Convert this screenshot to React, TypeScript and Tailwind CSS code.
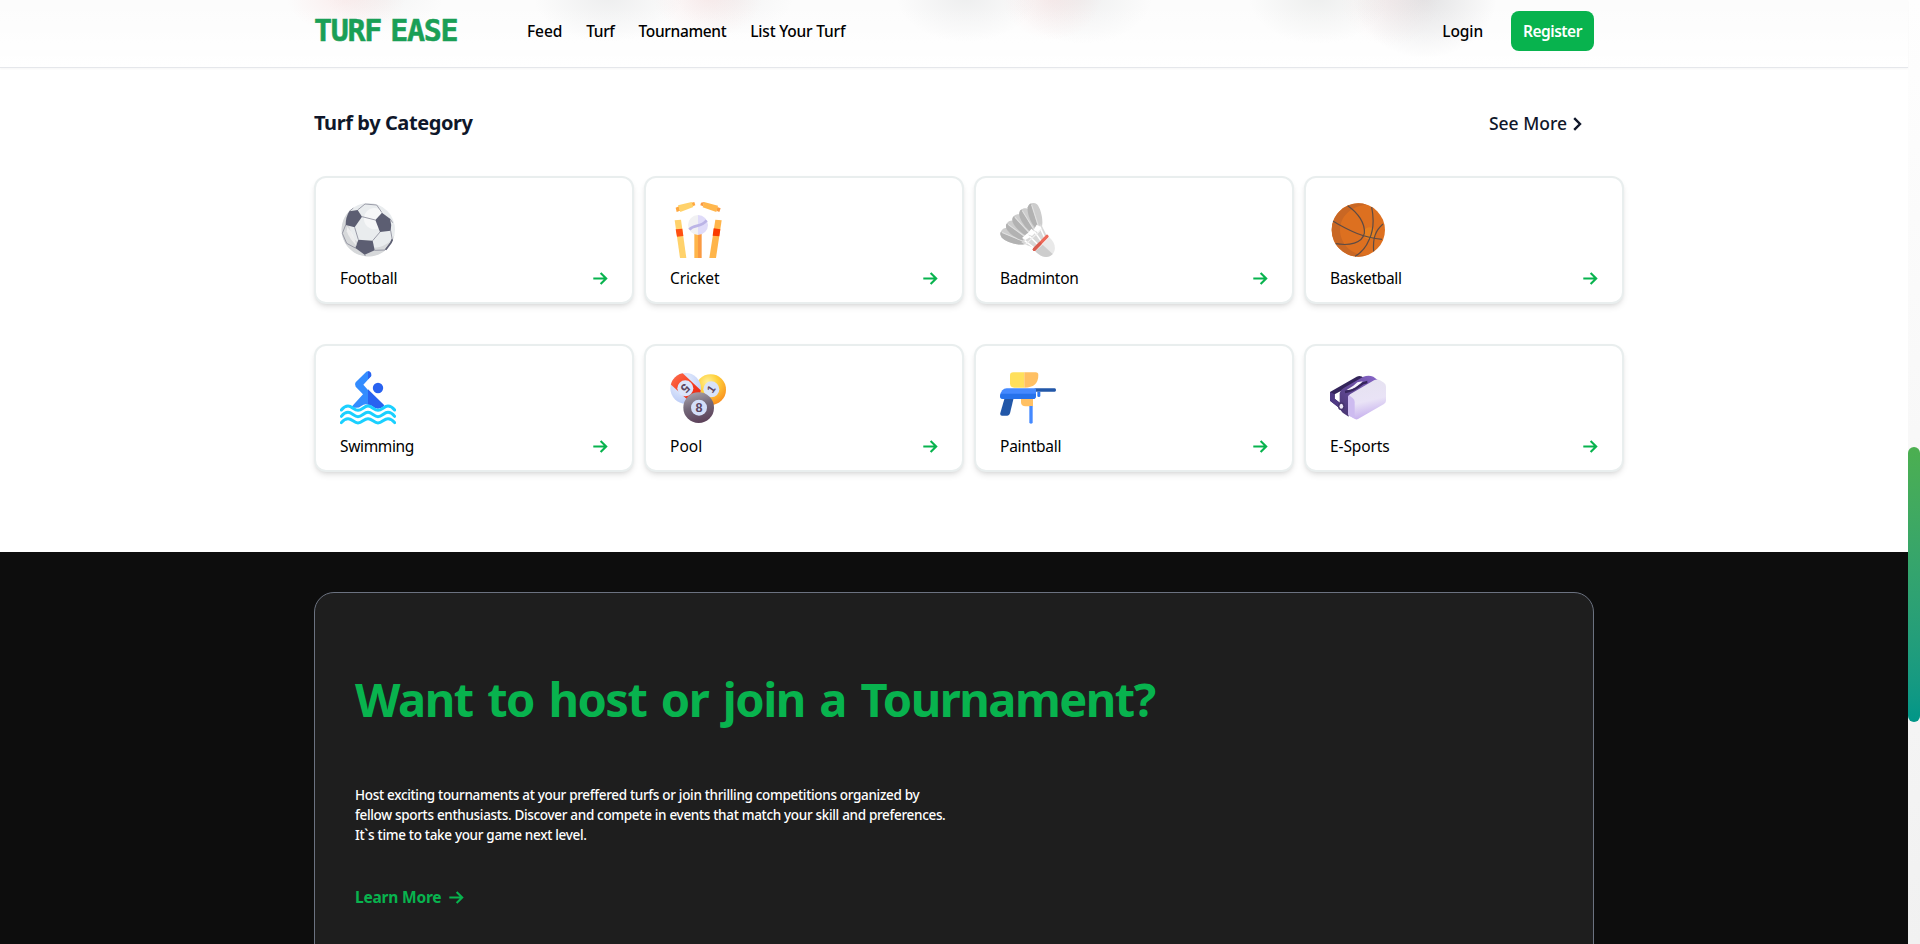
import React from "react";

type IconProps = { className?: string };

function ArrowRight({ className = "" }: IconProps) {
  return (
    <svg viewBox="0 0 15 13" className={"h-[13px] w-[15px] " + className} fill="none" stroke="currentColor" strokeWidth="2.1">
      <path d="M0.3 6.5H13.2M7.600 0.9L13.2 6.5L7.600 12.1" />
    </svg>
  );
}

function FootballIcon() {
  return (
    <svg viewBox="0 0 168 168" className="size-14">
      <circle cx="85" cy="83" r="80" fill="#e9ecee" />
      <path d="M36 20A80 80 0 1 0 163 100C140 150 60 150 36 100C24 72 24 44 36 20Z" fill="#d6d8da" />
      <circle cx="104" cy="50" r="32" fill="#f6f7f8" />
      <g fill="none" stroke="#8d8e9c" strokeWidth="2.6">
        <path d="M66 44L106 54M53 24L75 6L110 9L126 32M44 76L55 113M120 90L98 116M17 69L7 94L20 124L46 138M152 86L157 114L135 144L104 145" />
        <path d="M150 50L158 62M28 28L40 18M74 158L76 162" />
      </g>
      <path d="M157 112L153 122L137 143" fill="none" stroke="#5c5e72" strokeWidth="5" />
      <g fill="#5c5e72">
        <path d="M28 28L53 24L66 44L44 76L17 69Q17 45 28 28Z" />
        <path d="M126 32L150 50Q156 68 152 86L120 90L106 54Z" />
        <path d="M55 113L98 116L104 145L74 158L46 138Z" />
      </g>
      <path d="M22 74Q42 96 50 132Q28 110 20 88Z" fill="#f7f7f7" opacity=".7" />
    </svg>
  );
}

function CricketIcon() {
  return (
    <svg viewBox="0 0 168 168" className="size-14">
      <path d="M17 17L27 13L30 26L20 30ZM64 2L73 0L76 10L67 13Z" fill="#ffa63d" />
      <path d="M24 10L65 0L70 15L31 30Z" fill="#ffd26b" />
      <path d="M93 2L102 0L100 13L91 10ZM142 15L152 19L148 30L139 26Z" fill="#fa9a42" />
      <path d="M102 0L144 11L139 30L98 16Z" fill="#ffb74d" />
      <path d="M14 55L33 53L49 168H30Z" fill="#ffd26b" />
      <path d="M17 82L37 80L40 102L21 104Z" fill="#ff5012" />
      <path d="M136 53L155 55L138 168H118Z" fill="#ffb54a" />
      <path d="M131 79L151 82L148 103L128 101Z" fill="#fa3a00" />
      <path d="M73 92H84V168H73Z" fill="#ffb54a" />
      <path d="M84 92H95V168H84Z" fill="#fa9a42" />
      <path d="M84 39A30 30 0 0 0 84 99Z" fill="#f1f1f3" />
      <path d="M84 39A30 30 0 0 1 84 99Z" fill="#dfdbf9" />
      <path d="M58 83C72 66 92 78 110 55" fill="none" stroke="#bbb4e6" strokeWidth="8" />
    </svg>
  );
}

const feathers = [
  "translate(40 104) rotate(20)",
  "translate(54 87) rotate(34)",
  "translate(70 71) rotate(45)",
  "translate(87 56) rotate(56)",
  "translate(107 42) rotate(70)",
];

function BadmintonIcon() {
  return (
    <svg viewBox="0 0 168 168" className="size-14">
      <path d="M20 90L60 50L110 30L120 80L84 116L30 104Z" fill="#b8b8b8" />
      {feathers.map((t) => (
        <g key={t} transform={t}>
          <path d="M44 5C34 20 -12 24 -32 14C-43 7 -43 -9 -32 -16C-12 -24 34 -15 44 0Z" fill="#cdcdcd" />
          <path d="M44 5C34 20 -12 24 -32 14C-40 8 -41 4 -40 0Z" fill="#b2b2b2" />
          <path d="M-36 0L42 3" stroke="#e2e2e2" strokeWidth="3" />
        </g>
      ))}
      <path d="M64 121L84 92L104 78L123 66L141 103L105 139L72 126Z" fill="#d8d8d8" />
      <path d="M66 108L82 94L90 106L76 114ZM82 96L94 80L106 92L96 102ZM101 84L110 68L124 76L116 92Z" fill="#fff" />
      <path d="M74 116L103 138M88 102L114 128M103 88L124 118M119 74L134 107" stroke="#fff" strokeWidth="4.5" />
      <path d="M76 128L126 80" stroke="#f2f2f2" strokeWidth="3.5" />
      <path d="M106 148L148 106C164 120 170 140 159 155C146 170 124 168 106 148Z" fill="#e9e9e9" />
      <path d="M106 148L128 128L158 156C146 170 124 168 106 148Z" fill="#cdcdcd" />
      <path d="M103 142L141 103" stroke="#ed6a5a" strokeWidth="10" strokeLinecap="round" />
      <path d="M103 142L120 125" stroke="#d75c4f" strokeWidth="10" strokeLinecap="round" />
    </svg>
  );
}

function BasketballIcon() {
  return (
    <svg viewBox="0 0 168 168" className="size-14">
      <circle cx="85" cy="84" r="80" fill="#dd7020" />
      <path d="M110 8A80 80 0 1 0 110 160C60 160 30 120 30 84C30 46 60 12 110 8Z" fill="#c96724" />
      <circle cx="118" cy="94" r="18" fill="#e5801f" />
      <g fill="none" stroke="#5c4b45" strokeWidth="3.6">
        <path d="M53 11C84 32 106 64 103 94C96 124 58 132 17 125" />
        <path d="M9 58C50 80 90 106 156 112" />
        <path d="M125 15C132 50 132 82 118 112C108 136 96 152 75 163" />
        <path d="M159 66C136 86 128 108 131 148" />
      </g>
    </svg>
  );
}

function SwimmingIcon() {
  const wave =
    "M4 120C12 110 18 108 24 108C36 108 42 121 54 121C66 121 72 108 84 108C96 108 102 121 114 121C126 121 132 108 144 108C150 108 156 110 164 120";
  return (
    <svg viewBox="0 0 168 168" className="size-14">
      <path d="M84 104V60L70 44L94 18Q92 4 84 4Q80 4 76 8L47 37Q42 44 47 50L69 73L35 110Q52 118 64 108Q74 100 84 104Z" fill="#338cff" />
      <path d="M84 4Q94 5 94 14Q94 18 91 21L84 28ZM84 58L133 106Q126 116 114 116Q104 116 96 108Q90 104 84 104Z" fill="#2962f0" />
      <circle cx="114" cy="54" r="15.5" fill="#2962f0" />
      <g fill="none" stroke="#1bd0ff" strokeWidth="9" strokeLinecap="round">
        <path d={wave} />
        <path d={wave} transform="translate(0 19)" />
        <path d={wave} transform="translate(0 38)" />
      </g>
    </svg>
  );
}

function PoolIcon() {
  return (
    <svg viewBox="0 0 168 168" className="size-14">
      <defs>
        <radialGradient id="poolYellow" cx=".4" cy=".25" r=".8">
          <stop offset="0" stopColor="#fff09a" />
          <stop offset=".4" stopColor="#ffd23c" />
          <stop offset="1" stopColor="#f98a1c" />
        </radialGradient>
        <radialGradient id="poolWhite" cx=".4" cy=".3" r=".8">
          <stop offset="0" stopColor="#f2f6ff" />
          <stop offset="1" stopColor="#b3c6f5" />
        </radialGradient>
        <linearGradient id="poolRed" x1="0" y1="0" x2="1" y2="1">
          <stop offset="0" stopColor="#ff7a58" />
          <stop offset=".5" stopColor="#f5391d" />
          <stop offset="1" stopColor="#e01f10" />
        </linearGradient>
        <linearGradient id="poolBlack" x1=".3" y1="0" x2=".6" y2="1">
          <stop offset="0" stopColor="#a79fa8" />
          <stop offset=".45" stopColor="#74697a" />
          <stop offset="1" stopColor="#5b3f58" />
        </linearGradient>
        <clipPath id="poolFive">
          <circle cx="47" cy="55" r="46" />
        </clipPath>
      </defs>
      <circle cx="122" cy="59" r="46" fill="url(#poolYellow)" />
      <circle cx="47" cy="55" r="46" fill="url(#poolWhite)" />
      <g clipPath="url(#poolFive)">
        <path d="M-8 34L32 4L110 78L84 118Z" fill="url(#poolRed)" />
      </g>
      <circle cx="46" cy="55" r="24" fill="#dbe5fc" />
      <circle cx="124" cy="58" r="24" fill="#d9e3f8" />
      <circle cx="86" cy="113" r="46" fill="url(#poolBlack)" />
      <circle cx="87" cy="113" r="24" fill="#d3def9" />
      <g fill="#5b4560" fontFamily="Liberation Sans, sans-serif" fontWeight="700" fontSize="38" textAnchor="middle">
        <text transform="translate(46 55) rotate(135)" y="13">5</text>
        <text transform="translate(123 57) rotate(-55)" y="12" fontSize="33">1</text>
        <text x="87" y="127">8</text>
      </g>
    </svg>
  );
}

function PaintballIcon() {
  return (
    <svg viewBox="0 0 168 168" className="size-14">
      <path d="M73 7H40Q30 7 30 17V40Q30 53 43 53H73Z" fill="#ffe05c" />
      <path d="M73 7H107Q115 7 115 15Q115 53 73 53Z" fill="#ffc063" />
      <path d="M104 55H164Q168 55 168 60Q168 65 164 65H104Z" fill="#2257a8" />
      <path d="M112 65H121V77Q121 81 116.5 81Q112 81 112 77Z" fill="#2d78ef" />
      <path d="M14 84H41L30 130Q28 137 22 137H6Q-1 137 1 129Z" fill="#2257a8" />
      <path d="M63 85H99V109H77Q63 109 63 96Z" fill="#ffc063" />
      <path d="M88 108H98V157Q98 161 93 161Q88 161 88 157Z" fill="#4489ff" />
      <path d="M20 55H108V77Q108 87 98 87H9Q0 87 0 78Q4 55 20 55Z" fill="#4489ff" />
      <path d="M2 71H108V77Q108 87 98 87H9Q0 87 0 78Z" fill="#2672eb" />
    </svg>
  );
}

function HeadsetIcon() {
  return (
    <svg viewBox="0 0 168 168" className="size-14">
      <defs>
        <linearGradient id="visor" x1=".35" y1=".1" x2=".55" y2="1">
          <stop offset="0" stopColor="#e6e2f1" />
          <stop offset=".5" stopColor="#e9e3f6" />
          <stop offset="1" stopColor="#c3abed" />
        </linearGradient>
        <linearGradient id="mask" x1="0" y1="1" x2="1" y2="0">
          <stop offset="0" stopColor="#43316c" />
          <stop offset="1" stopColor="#8a68cc" />
        </linearGradient>
      </defs>
      <path d="M0 66L80 20Q92 15 102 24L98 34L82 37L14 73V86L34 102L40 124L28 114L0 92Z" fill="#33245a" />
      <path d="M0 66L14 73V86L34 102L40 124L0 92Z" fill="#4f3984" />
      <path d="M29 70Q32 58 45 52L100 20Q116 14 130 20L146 32L56 86V140L38 128Q28 120 29 96Z" fill="url(#mask)" />
      <path d="M50 60L70 47L82 37L98 34Q90 50 62 60Z" fill="#f6f3fb" />
      <path d="M45 66Q70 62 86 49Q98 38 112 36" fill="none" stroke="#36265c" strokeWidth="7" />
      <ellipse cx="34" cy="109" rx="10" ry="12" fill="#46346e" />
      <ellipse cx="34" cy="109" rx="5.5" ry="7.5" fill="#eee9f8" />
      <path d="M54 84Q54 78 60 73L132 31Q142 26 150 31L162 38Q168 42 168 50V92Q168 98 162 102L84 147Q79 150 74 146L59 138Q54 135 54 130Z" fill="url(#visor)" />
      <path d="M54 84Q54 78 57 76L68 84Q74 88 74 96V146L59 138Q54 135 54 130Z" fill="#cdbbf0" />
    </svg>
  );
}

const categories = [
  { name: "Football", Icon: FootballIcon, tracking: "tracking-[-0.15px]" },
  { name: "Cricket", Icon: CricketIcon, tracking: "tracking-[-0.12px]" },
  { name: "Badminton", Icon: BadmintonIcon, tracking: "tracking-[-0.25px]" },
  { name: "Basketball", Icon: BasketballIcon, tracking: "tracking-[-0.35px]" },
  { name: "Swimming", Icon: SwimmingIcon, tracking: "tracking-[-0.35px]" },
  { name: "Pool", Icon: PoolIcon, tracking: "tracking-normal" },
  { name: "Paintball", Icon: PaintballIcon, tracking: "tracking-[-0.25px]" },
  { name: "E-Sports", Icon: HeadsetIcon, tracking: "tracking-[-0.1px]" },
];

function Header() {
  return (
    <header className="relative h-[68px] shrink-0 border-b border-[#e5e7eb] bg-[#fcfcfc] shadow-[0_1px_2px_rgba(0,0,0,0.04)]">
      <div className="absolute inset-0 bg-[radial-gradient(60px_38px_at_346px_-4px,rgba(240,150,150,0.15),transparent),radial-gradient(60px_38px_at_385px_-6px,rgba(120,130,130,0.06),transparent),radial-gradient(75px_46px_at_608px_-4px,rgba(110,115,120,0.1),transparent),radial-gradient(55px_42px_at_708px_-4px,rgba(240,150,150,0.14),transparent),radial-gradient(60px_42px_at_735px_-6px,rgba(110,115,120,0.06),transparent),radial-gradient(70px_46px_at_966px_-4px,rgba(110,115,120,0.1),transparent),radial-gradient(50px_44px_at_1052px_-4px,rgba(240,150,150,0.14),transparent),radial-gradient(70px_48px_at_1083px_-4px,rgba(110,115,120,0.09),transparent),radial-gradient(70px_48px_at_1318px_-4px,rgba(110,120,115,0.1),transparent),radial-gradient(50px_48px_at_1390px_-2px,rgba(240,170,170,0.1),transparent),radial-gradient(72px_62px_at_1425px_-4px,rgba(95,95,105,0.16),transparent),linear-gradient(to_bottom,transparent,#ffffff)]" />
      <div className="relative mx-auto flex h-[62px] w-[1280px] items-center">
        <span className="w-[213px] whitespace-nowrap font-['DejaVu_Sans_Mono',monospace] text-[30px] leading-[30px] font-bold tracking-[-1.3px] [word-spacing:-7.5px] text-[#1a9f56] [-webkit-text-stroke:0.5px_#1a9f56]">
          TURF EASE
        </span>
        <nav className="flex items-center gap-6 text-[15.5px] leading-6 font-medium text-black">
          <a className="tracking-[-0.1px]">Feed</a>
          <a className="tracking-[-0.35px]">Turf</a>
          <a className="tracking-[-0.35px]">Tournament</a>
          <a className="tracking-[-0.2px]">List Your Turf</a>
        </nav>
        <div className="ml-auto flex items-center gap-7 text-[15.5px] leading-6">
          <a className="font-medium tracking-[-0.1px] text-black">Login</a>
          <button className="flex h-10 w-[83px] items-center justify-center rounded-lg bg-[#08b34e] font-semibold tracking-[-0.5px] text-white">
            Register
          </button>
        </div>
      </div>
    </header>
  );
}

export default function App() {
  return (
    <div className="flex h-[944px] w-[1920px] overflow-hidden bg-white font-['Noto_Sans',sans-serif]">
      <div className="flex w-[1908px] flex-col">
        <Header />
        <main className="flex flex-1 flex-col">
          <section className="h-[484px] shrink-0 px-[314px] pt-[41px]">
            <div className="flex h-7 items-center justify-between pr-3 text-[#0f172a]">
              <h2 className="text-[20px] leading-7 font-bold tracking-[-0.42px]">Turf by Category</h2>
              <a className="flex items-center gap-1.5 text-[17.5px] leading-7 font-medium">
                See More
                <svg viewBox="0 0 9 14" className="mt-px h-3.5 w-[9px]" fill="none" stroke="currentColor" strokeWidth="2.4">
                  <path d="M1.2 1.2L7 7L1.2 12.8" />
                </svg>
              </a>
            </div>
            <div className="mt-[39px] grid grid-cols-[repeat(4,320px)] gap-x-2.5 gap-y-10">
              {categories.map(({ name, Icon, tracking }) => (
                <article
                  key={name}
                  className="flex h-32 flex-col gap-2 rounded-xl border-2 border-[#e9eeee] bg-white px-6 pt-6 shadow-[0_4px_6px_-1px_rgba(0,0,0,0.1),0_2px_4px_-2px_rgba(0,0,0,0.1)]"
                >
                  <Icon />
                  <div className="flex h-6 items-center justify-between">
                    <p className={"text-[15.5px] leading-6 text-black " + tracking}>{name}</p>
                    <ArrowRight className="text-[#08b34e]" />
                  </div>
                </article>
              ))}
            </div>
          </section>
          <section className="flex-1 bg-[#0d0d0d] px-[314px] pt-10">
            <div className="h-[400px] rounded-[20px] border border-[#6b7280] bg-[#1e1e1e] px-10 pt-[75px]">
              <h1 className="text-[47px] leading-[62px] font-bold tracking-[-1.5px] whitespace-nowrap [word-spacing:3.8px] text-[#08b34e]">
                Want to host or join a Tournament?
              </h1>
              <p className="mt-[55px] text-[13.5px] leading-5 font-medium tracking-[-0.32px] whitespace-nowrap text-white">
                Host exciting tournaments at your preffered turfs or join thrilling competitions organized by
                <br />
                fellow sports enthusiasts. Discover and compete in events that match your skill and preferences.
                <br />
                It`s time to take your game next level.
              </p>
              <a className="mt-10 flex items-center gap-2 text-[15.5px] leading-6 font-bold tracking-[-0.2px] text-[#08b34e]">
                Learn More
                <ArrowRight />
              </a>
            </div>
          </section>
        </main>
      </div>
      <div className="w-3 bg-linear-to-b from-[#fefefe] to-[#f1f1f1] pt-[447px]">
        <div className="h-[275px] rounded-full bg-linear-to-b from-[#4caf50] to-[#009688]" />
      </div>
    </div>
  );
}
